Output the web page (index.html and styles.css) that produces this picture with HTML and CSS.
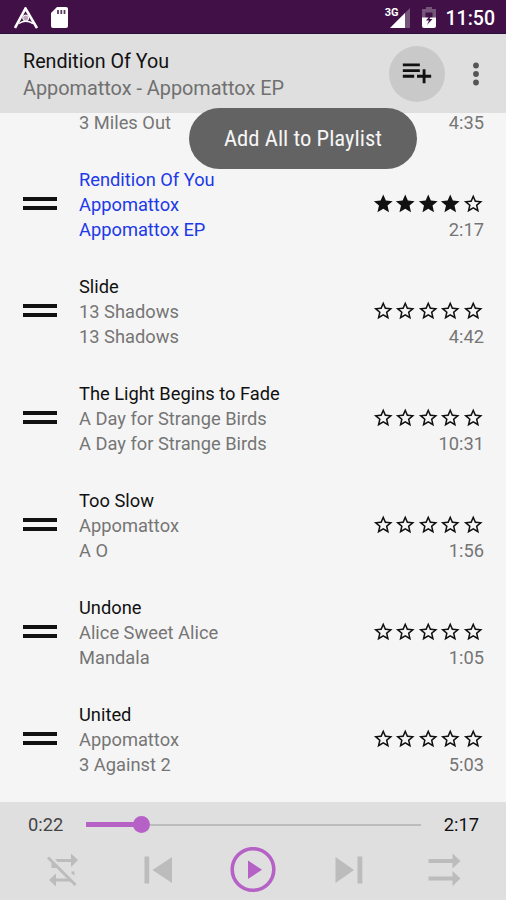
FILE: index.html
```
<!DOCTYPE html>
<html lang="en">
<head>
<meta charset="utf-8">
<title>Playlist</title>
<link rel="stylesheet" href="styles.css">
</head>
<body>
<svg class="defs" aria-hidden="true">
  <symbol id="full" viewBox="0 0 24 24"><path d="M12 17.27 18.18 21l-1.64-7.03L22 9.24l-7.19-.61L12 2 9.19 8.63 2 9.24l5.46 4.73L5.82 21z"/></symbol>
  <symbol id="empty" viewBox="0 0 24 24"><path d="M22 9.24l-7.19-.62L12 2 9.19 8.63 2 9.24l5.46 4.73L5.82 21 12 17.27 18.18 21l-1.63-7.03L22 9.24zM12 15.4l-3.76 2.27 1-4.28-3.32-2.88 4.38-.38L12 6.1l1.71 4.04 4.38.38-3.32 2.88 1 4.28L12 15.4z"/></symbol>
</svg>
<div class="statusbar">
  <svg class="app-mark" width="24" height="22" viewBox="0 0 24 22"><path d="M1 21 11.5 1.500 23 21" fill="none" stroke="#fff" stroke-width="2.600"/><path d="M5 16.500q6.500-4.500 14 0" fill="none" stroke="#fff" stroke-width="1.500"/><circle cx="11.700" cy="11" r="3" fill="#b9a6bc" stroke="#fff"/></svg>
  <svg class="sd" width="17" height="21" viewBox="0 0 17 21"><path d="M6 0h9q2 0 2 2v17q0 2-2 2H2q-2 0-2-2V6z" fill="#fff"/><path d="M7 3v4M10.300 3v4M13.500 3v4" stroke="#5b3a60" stroke-width="1.800"/></svg>
  <div class="signal"><span>3G</span><svg width="20" height="20" viewBox="0 0 20 20"><path d="M20 0V20H0z" fill="#755579"/><path d="M15 5V20H0z" fill="#fff"/></svg></div>
  <svg class="battery" width="14" height="21" viewBox="0 0 14 21"><path d="M4 0h6v2h4v9H0V2h4z" fill="#755579"/><path d="M3.500 5.500h7v6h-7z" fill="#401046"/><path d="M0 10.500h14v8.500q0 2-2 2H2q-2 0-2-2z" fill="#fff"/><path d="M9.500 7 4 13.500h3L5 18l5.500-6H7.500z" fill="#401046"/></svg>
  <span class="clock">11:50</span>
</div>
<header class="toolbar">
  <div class="now">
    <div class="now-title">Rendition Of You</div>
    <div class="now-sub">Appomattox - Appomattox EP</div>
  </div>
  <div class="add"><svg width="34" height="34" viewBox="0 0 24 24"><path d="M14 10H2v2h12v-2zm0-4H2v2h12V6zm4 8v-4h-2v4h-4v2h4v4h2v-4h4v-2h-4zM2 16h8v-2H2v2z"/></svg></div>
  <svg class="more" width="8" height="24" viewBox="0 0 8 24"><circle cx="4" cy="3.500" r="2.900"/><circle cx="4" cy="12" r="2.900"/><circle cx="4" cy="20.500" r="2.900"/></svg>
  <div class="tooltip"><span>Add All to Playlist</span></div>
</header>
<main class="list" id="list"></main>
<footer class="player">
  <div class="progress">
    <span class="elapsed">0:22</span>
    <div class="track"><div class="played"></div><div class="thumb"></div><div class="rest"></div></div>
    <span class="total">2:17</span>
  </div>
  <div class="controls">
    <svg width="46" height="46" viewBox="0 0 46 46"><g fill="#bcbcbc"><path d="M16 12H32V6.500l7 6.500-7 7V15H18.500zM33 34.500H17v5l-7-6.500 7-6.500V31.500H30zM12.500 15.500l5 5.500h-5zM32.500 24.500h3V28.500l-3-2z"/></g><path d="M9 10.500 36.500 38" stroke="#bcbcbc" stroke-width="3"/></svg>
    <svg width="46" height="46" viewBox="0 0 46 46"><path d="M9.500 9.500h4.700v27H9.500zM37 10v26L17.500 23z" fill="#bcbcbc"/></svg>
    <svg width="46" height="46" viewBox="0 0 46 46"><circle cx="23" cy="22.500" r="20.800" fill="none" stroke="#b661c6" stroke-width="3.600"/><path d="M18 13.500v18.500L32 22.700z" fill="#b661c6"/></svg>
    <svg width="46" height="46" viewBox="0 0 46 46"><path d="M9.500 10v26L28 23zM31.500 9.500h4.800v27h-4.800z" fill="#bcbcbc"/></svg>
    <svg width="46" height="46" viewBox="0 0 46 46"><path d="M7.500 12H31.500V6.500l8 7.500-8 7.500V16H7.500zM7.500 29.500H31.500V24l8 7.500-8 7.500V33.500H7.500z" fill="#bcbcbc"/></svg>
  </div>
</footer>
<script src="list.js"></script>
</body>
</html>
```
FILE: styles.css
```
* { box-sizing: border-box; }
body {
  margin: 0;
  width: 506px;
  height: 900px;
  display: flex;
  flex-direction: column;
  overflow: hidden;
  background: #f5f5f5;
  font-family: Roboto, sans-serif;
  font-size: 18.3px;
  line-height: 25px;
  color: #111;
}
svg { display: block; flex: none; }
.defs { position: absolute; width: 0; height: 0; }
.statusbar {
  height: 34px;
  flex: none;
  display: flex;
  align-items: center;
  padding: 2px 11px 0 14px;
  background: #401046;
  border-bottom: 1px solid #29103a;
  color: #fff;
}
.sd { margin-left: 13px; }
.signal { display: flex; margin-left: auto; }
.signal span { font-size: 11px; font-weight: 700; line-height: 9px; margin-right: -9px; z-index: 1; }
.battery { margin-left: 12px; }
.clock { margin-left: 10px; padding-top: 1px; font-size: 19.500px; font-weight: 500; }
.toolbar {
  position: relative;
  z-index: 2;
  height: 79px;
  flex: none;
  display: flex;
  align-items: center;
  padding: 0 26px 0 23px;
  background: #dfdfdf;
}
.now { flex: 1; padding-top: 2px; font-size: 19.700px; line-height: 27px; white-space: nowrap; }
.now-sub { color: #707070; font-size: 19.850px; }
.add {
  width: 56px;
  height: 56px;
  border-radius: 50%;
  background: #c9c9c9;
  display: grid;
  place-items: center;
}
.add svg { margin-bottom: 3px; margin-right: 1px; fill: #111; }
.more { margin-left: 27px; fill: #555; }
.tooltip {
  position: absolute;
  left: 189px;
  top: 73.500px;
  width: 228px;
  height: 61.500px;
  padding-top: 1px;
  border-radius: 31px;
  background: #636363;
  color: #f5f5f5;
  display: grid;
  place-items: center;
  font-family: "Roboto Condensed", Roboto, sans-serif;
  font-stretch: 75%;
  font-size: 22.700px;
  white-space: nowrap;
}
.list { flex: 1; min-height: 0; overflow: hidden; }
.row { height: 107px; display: flex; align-items: center; padding: 0 22px 1px 23px; }
.row:first-child { margin-top: -69px; }
.handle { width: 34px; height: 13px; margin: -1px 22px 0 0; border: solid #111; border-width: 4px 0; }
.info { flex: 1; }
.sub { color: #757575; }
.current .info div { color: #2039e8; }
.side { padding-top: 25px; text-align: right; color: #757575; }
.stars { display: flex; height: 25px; align-items: center; }
.stars svg { width: 22.500px; height: 23.500px; fill: #111; overflow: visible; }
.player { height: 98px; flex: none; background: #dfdfdf; }
.progress { display: flex; align-items: center; height: 45px; padding: 0 27px 0 28px; }
.elapsed { width: 58px; color: #444; }
.total { width: 36px; margin-left: 22px; text-align: right; }
.track { flex: 1; display: flex; align-items: center; }
.played { width: 48px; height: 5px; background: #b661c6; }
.thumb { width: 17px; height: 17px; border-radius: 50%; background: #b661c6; margin-left: -1px; }
.rest { flex: 1; height: 2px; background: #bdbdbd; }
.controls { display: flex; justify-content: space-between; padding: 0 39px; }
```
FILE: list.js
```
const tracks = [
  ["", "", "3 Miles Out", "4:35", 0],
  ["Rendition Of You", "Appomattox", "Appomattox EP", "2:17", 4],
  ["Slide", "13 Shadows", "13 Shadows", "4:42", 0],
  ["The Light Begins to Fade", "A Day for Strange Birds", "A Day for Strange Birds", "10:31", 0],
  ["Too Slow", "Appomattox", "A O", "1:56", 0],
  ["Undone", "Alice Sweet Alice", "Mandala", "1:05", 0],
  ["United", "Appomattox", "3 Against 2", "5:03", 0]
];
document.getElementById("list").innerHTML = tracks.map(([title, artist, album, time, rating], i) => `
  <div class="row${i === 1 ? " current" : ""}">
    <div class="handle"></div>
    <div class="info"><div>${title || "&nbsp;"}</div><div class="sub">${artist || "&nbsp;"}</div><div class="sub">${album}</div></div>
    <div class="side"><div class="stars">${[0, 1, 2, 3, 4].map(n => `<svg><use href="#${n < rating ? "full" : "empty"}"/></svg>`).join("")}</div><div>${time}</div></div>
  </div>`).join("");
```
